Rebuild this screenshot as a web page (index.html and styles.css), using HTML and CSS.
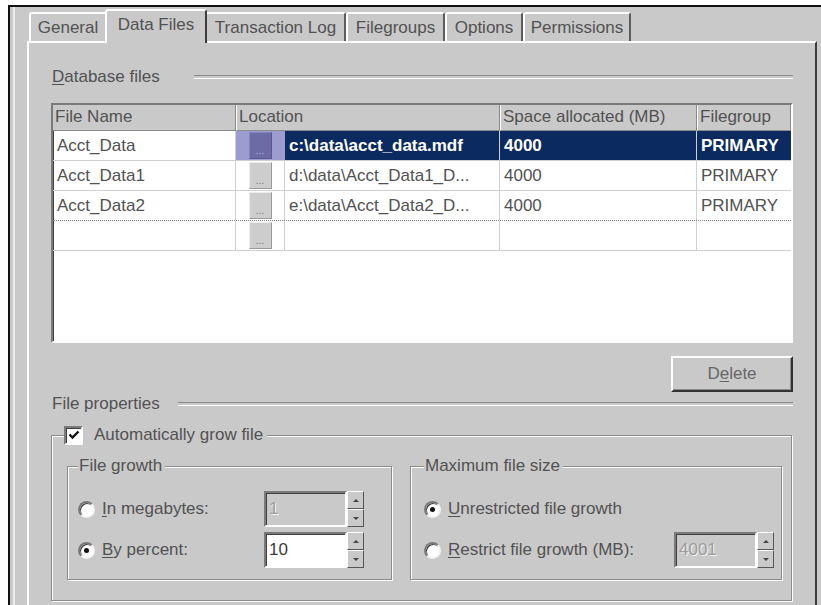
FILE: index.html
```html
<!DOCTYPE html>
<html lang="en">
<head>
<meta charset="utf-8">
<title>Database Properties</title>
<link rel="stylesheet" href="styles.css">
</head>
<body>
<div class="window">
  <div class="tabstrip">
    <div class="tab">General</div>
    <div class="tab tab-active">Data Files</div>
    <div class="tab">Transaction Log</div>
    <div class="tab">Filegroups</div>
    <div class="tab">Options</div>
    <div class="tab">Permissions</div>
  </div>

  <div class="page">
    <div class="section-title section-title-wide files-title"><span><u>D</u>atabase files</span></div>

    <div class="grid">
      <div class="grid-row grid-head">
        <div class="cell">File Name</div>
        <div class="cell cell-span">Location</div>
        <div class="cell">Space allocated (MB)</div>
        <div class="cell cell-last">Filegroup</div>
      </div>
      <div class="grid-body">
        <div class="grid-row row-selected">
          <div class="cell cell-name">Acct_Data</div>
          <div class="cell cell-btn"><span class="ellipsis">...</span></div>
          <div class="cell cell-sel">c:\data\acct_data.mdf</div>
          <div class="cell cell-sel">4000</div>
          <div class="cell cell-sel cell-last">PRIMARY</div>
        </div>
        <div class="grid-row">
          <div class="cell">Acct_Data1</div>
          <div class="cell cell-btn"><span class="ellipsis">...</span></div>
          <div class="cell">d:\data\Acct_Data1_D...</div>
          <div class="cell">4000</div>
          <div class="cell cell-last">PRIMARY</div>
        </div>
        <div class="grid-row row-focus">
          <div class="cell">Acct_Data2</div>
          <div class="cell cell-btn"><span class="ellipsis">...</span></div>
          <div class="cell">e:\data\Acct_Data2_D...</div>
          <div class="cell">4000</div>
          <div class="cell cell-last">PRIMARY</div>
        </div>
        <div class="grid-row">
          <div class="cell"></div>
          <div class="cell cell-btn"><span class="ellipsis">...</span></div>
          <div class="cell"></div>
          <div class="cell"></div>
          <div class="cell cell-last"></div>
        </div>
      </div>
    </div>

    <div class="actions">
      <button class="btn" type="button">D<u>e</u>lete</button>
    </div>

    <div class="section-title props-title"><span>File properties</span></div>

    <fieldset class="group group-outer">
      <legend class="outer-legend">
        <span class="check"><svg viewBox="0 0 14 14" width="14" height="14"><path d="M2.5 6.5 L5.5 9.5 L11.5 3.5" stroke="#111" stroke-width="2.4" fill="none"/></svg></span>
        <span>Automatically grow file</span>
      </legend>

      <div class="group-pair">
        <fieldset class="group group-growth">
          <legend>File growth</legend>
          <div class="opt-row">
            <label class="opt"><span class="radio"></span><span><u>I</u>n megabytes:</span></label>
            <div class="spin">
              <div class="field field-disabled">1</div>
              <div class="spin-btns"><span class="spin-btn spin-up"></span><span class="spin-btn spin-down"></span></div>
            </div>
          </div>
          <div class="opt-row">
            <label class="opt"><span class="radio radio-on"></span><span><u>B</u>y percent:</span></label>
            <div class="spin">
              <div class="field">10</div>
              <div class="spin-btns"><span class="spin-btn spin-up"></span><span class="spin-btn spin-down"></span></div>
            </div>
          </div>
        </fieldset>

        <fieldset class="group group-max">
          <legend>Maximum file size</legend>
          <div class="opt-row">
            <label class="opt"><span class="radio radio-on"></span><span><u>U</u>nrestricted file growth</span></label>
          </div>
          <div class="opt-row">
            <label class="opt"><span class="radio"></span><span><u>R</u>estrict file growth (MB):</span></label>
            <div class="spin">
              <div class="field field-disabled">4001</div>
              <div class="spin-btns"><span class="spin-btn spin-up"></span><span class="spin-btn spin-down"></span></div>
            </div>
          </div>
        </fieldset>
      </div>
    </fieldset>
  </div>
</div>
</body>
</html>
```

FILE: styles.css
```css
* { box-sizing: border-box; }

html, body { margin: 0; }

body {
  background: #fff;
  padding: 5px 0 0 8px;
  font-family: "Liberation Sans", Arial, sans-serif;
  font-size: 17px;
  color: #525252;
  overflow: hidden;
}

u { text-decoration: underline; text-underline-offset: 2px; }

/* dialog frame */
.window {
  width: 813px;
  height: 600px;
  background: #c9c9c9;
  border-top: 2px solid #111;
  border-left: 2px solid #111;
  box-shadow: inset 3px 0 0 #c9c9c9, inset 5px 0 0 #ececec;
  overflow: hidden;
}

/* tab strip */
.tabstrip {
  display: grid;
  grid-template-columns: 78px 98px 141px 99px 78px 108px;
  align-items: end;
  height: 34px;
  padding-left: 19px;
  position: relative;
  z-index: 1;
}

.tab {
  height: 29px;
  display: flex;
  align-items: center;
  justify-content: center;
  background: #c9c9c9;
  border-top: 2px solid #fff;
  border-left: 2px solid #fff;
  border-right: 2px solid #5c5c5c;
  border-radius: 3px 3px 0 0;
  white-space: nowrap;
}

.tab-active {
  height: 34px;
  margin: 0 -2px -2px;
  padding-bottom: 4px;
  position: relative;
  z-index: 2;
  border-right-color: #3e3e3e;
}

/* tab page */
.page {
  margin-left: 17px;
  width: 790px;
  height: 580px;
  border-top: 2px solid #fff;
  border-left: 2px solid #fff;
  border-right: 2px solid #3c3c3c;
  padding: 0 22px 0 22px;
}

.section-title {
  display: flex;
  align-items: center;
  height: 18px;
  line-height: 18px;
  padding-left: 1px;
  white-space: nowrap;
}

.section-title::after {
  content: "";
  flex: 1;
  height: 2px;
  border-top: 1px solid #8a8a8a;
  border-bottom: 1px solid #fff;
  margin-left: 18px;
}

.section-title-wide::after { margin-left: 34px; }

.files-title { margin-top: 25px; }
.props-title { margin-top: 3px; }

/* data files grid */
.grid {
  margin-top: 17px;
  height: 240px;
  background: #fff;
  border: 2px solid;
  border-color: #7a7a7a #fff #fff #7a7a7a;
  box-shadow: inset 1px 1px 0 #404040;
  overflow: hidden;
}

.grid-row {
  display: grid;
  grid-template-columns: 183px 49px 215px 197px 94px;
}

.cell {
  white-space: nowrap;
  overflow: hidden;
}

.cell-span { grid-column: span 2; }

.grid-head {
  height: 26px;
  background: #c9c9c9;
}

.grid-head .cell {
  line-height: 24px;
  padding-left: 2px;
  border-left: 1px solid #fff;
  border-right: 1px solid #8a8a8a;
  border-bottom: 1px solid #8a8a8a;
}

.grid-head .cell:first-child { border-left: none; }

.grid-body .grid-row {
  height: 30px;
  border-bottom: 1px solid #d0d0d0;
}

.grid-body .row-focus { border-bottom: 1px dotted #888; }

.grid-body .cell {
  line-height: 29px;
  padding-left: 4px;
  border-right: 1px solid #d0d0d0;
}

.grid-body .cell-last { border-right: none; }

.cell-btn {
  display: flex;
  justify-content: center;
  align-items: center;
}

.grid-body .cell-btn { padding-left: 0; }

.ellipsis {
  width: 23px;
  height: 27px;
  background: #cdcdcd;
  border: 1px solid;
  border-color: #ececec #9a9a9a #9a9a9a #ececec;
  display: flex;
  align-items: flex-end;
  justify-content: center;
  font-size: 10px;
  line-height: 10px;
  color: #777;
  padding-bottom: 2px;
}

.row-selected .cell-sel {
  background: #0b2b60;
  color: #fff;
  font-weight: bold;
}

.row-selected .cell-btn { background: #9c9cd0; border-right-color: #9c9cd0; }

.row-selected .ellipsis {
  background: #6b6ba6;
  border-color: #8585bd #5a5a90 #5a5a90 #8585bd;
  color: #b9b9e0;
}

/* buttons */
.actions {
  display: flex;
  justify-content: flex-end;
  margin-top: 13px;
}

.btn {
  width: 122px;
  height: 36px;
  padding: 0;
  font: inherit;
  color: #666;
  background: #c9c9c9;
  border: 2px solid;
  border-color: #fff #333 #333 #fff;
  box-shadow: inset -1px -1px 0 #8a8a8a;
}

/* group boxes */
.group {
  margin: 0;
  min-width: 0;
  border: 1px solid #8c8c8c;
  box-shadow: inset 1px 1px 0 #fff, 1px 1px 0 #fff;
}

.group legend {
  padding: 0 3px 0 1px;
  height: 18px;
  line-height: 18px;
  background: #c9c9c9;
  white-space: nowrap;
}

.group-outer {
  margin-top: 12px;
  margin-right: 1px;
  padding: 12px 0 20px 15px;
}

.group-outer .outer-legend {
  display: flex;
  align-items: center;
  gap: 11px;
  height: 20px;
  margin-left: -3px;
  padding: 0 4px 0 0;
}

.check {
  width: 19px;
  height: 19px;
  background: #fff;
  border: 2px solid;
  border-color: #7a7a7a #fff #fff #7a7a7a;
  box-shadow: inset 1px 1px 0 #404040;
  display: flex;
  align-items: center;
  justify-content: center;
}

.group-pair {
  display: grid;
  grid-template-columns: 325px 372px;
  column-gap: 18px;
}

.group-growth { padding: 16px 0 11px 10px; }
.group-max { padding: 16px 0 11px 13px; }

.opt-row {
  display: grid;
  align-items: center;
  height: 36px;
}

.opt-row + .opt-row { margin-top: 5px; }

.group-growth .opt-row { grid-template-columns: 186px auto; }
.group-max .opt-row { grid-template-columns: 250px auto; }

.opt {
  display: flex;
  align-items: center;
  gap: 7px;
  white-space: nowrap;
}

.radio {
  width: 17px;
  height: 17px;
  border-radius: 50%;
  background: #fff;
  border: 2px solid;
  border-color: #7a7a7a #f4f4f4 #f4f4f4 #7a7a7a;
  box-shadow: inset 1px 1px 0 #3c3c3c;
  display: flex;
  align-items: center;
  justify-content: center;
}

.radio-on::after {
  content: "";
  width: 5px;
  height: 5px;
  border-radius: 50%;
  background: #111;
}

/* spin edit fields */
.spin { display: flex; }

.field {
  width: 83px;
  height: 36px;
  padding-left: 3px;
  line-height: 32px;
  background: #fff;
  color: #3c3c3c;
  border: 2px solid;
  border-color: #7a7a7a #fff #fff #7a7a7a;
  box-shadow: inset 1px 1px 0 #404040;
}

.field-disabled {
  background: #c9c9c9;
  color: #9c9c9c;
  text-shadow: 1px 1px 0 #f2f2f2;
}

.spin-btns {
  display: flex;
  flex-direction: column;
  width: 17px;
  height: 36px;
}

.spin-btn {
  flex: 1;
  background: #c9c9c9;
  border: 1px solid;
  border-color: #fff #555 #555 #fff;
  display: flex;
  align-items: center;
  justify-content: center;
}

.spin-btn::after {
  content: "";
  border-left: 3px solid transparent;
  border-right: 3px solid transparent;
}

.spin-up::after { border-bottom: 3px solid #444; }
.spin-down::after { border-top: 3px solid #444; }
```
